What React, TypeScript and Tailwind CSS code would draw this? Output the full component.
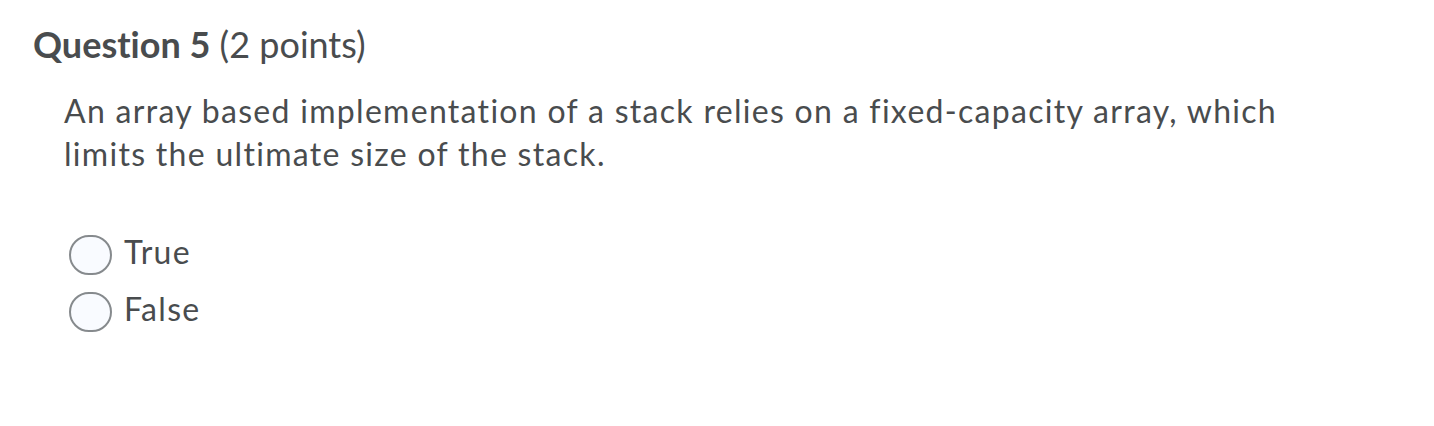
export default function App() {
  return (
    <div className="w-[1434px] h-[426px] bg-white text-[#494c4e] font-['Lato',sans-serif] [font-variant-ligatures:none]">
      <div className="pl-[33px] pt-[20px]">
        <h2 className="text-[36px] leading-[48px]">
          <span className="font-bold">Question 5</span> <span>(2 points)</span>
        </h2>
      </div>
      <div className="pl-[64px] pt-[21px]">
        <p className="text-[32px] leading-[43px] tracking-[1.3px] w-[1260px]">
          An array based implementation of a stack relies on a fixed-capacity array, which limits the ultimate size of the stack.
        </p>
        <div className="mt-[56px] flex flex-col gap-[16px] pl-[5px]">
          {["True", "False"].map((label) => (
            <label key={label} className="flex items-center gap-[12px] text-[32px] leading-[41px] tracking-[1.3px]">
              <span className="w-[43px] h-[40px] rounded-full border-2 border-[#868a8d] bg-[#f9fbff] translate-y-[3px]" />
              <span>{label}</span>
            </label>
          ))}
        </div>
      </div>
    </div>
  );
}
